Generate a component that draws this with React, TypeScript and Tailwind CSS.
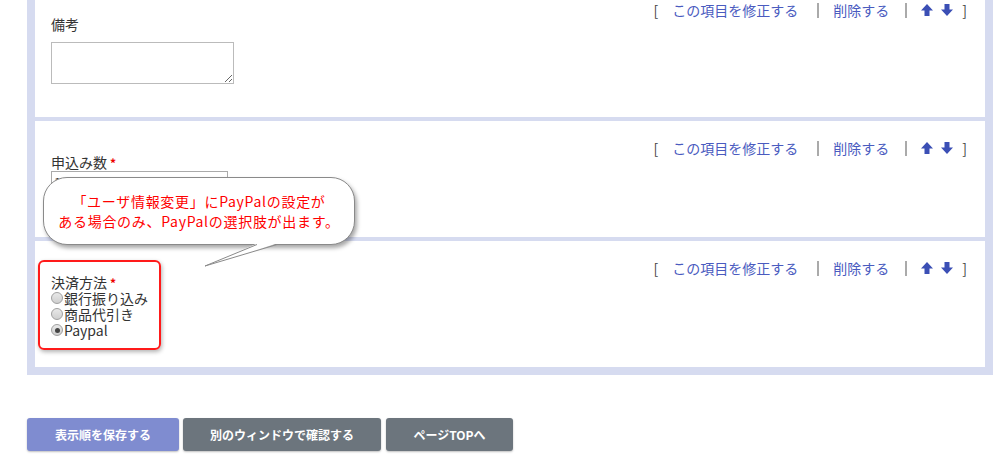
const font = "font-['Noto_Sans_CJK_JP','Noto_Sans',sans-serif]";

function Arrow({ down = false }: { down?: boolean }) {
  return (
    <svg width="14" height="14" viewBox="0 0 14 14" className={down ? 'rotate-180' : ''}>
      <path d="M7 1 L13 7.5 H9.5 V13 H4.5 V7.5 H1 Z" fill="#3b4fb5" />
    </svg>
  );
}

function Actions() {
  return (
    <div className="flex h-[14px] items-center justify-end pr-[18px] text-[14px] leading-[14px]">
      <span className="text-[#444]">[</span>
      <a className="ml-[14px] text-[#4a5bbf]">この項目を修正する</a>
      <span className="ml-[19px] mr-[14px] h-[15px] w-[2px] bg-[#aaa]" />
      <a className="text-[#4a5bbf]">削除する</a>
      <span className="ml-[16px] mr-[13px] h-[15px] w-[2px] bg-[#aaa]" />
      <Arrow />
      <span className="w-[6px]" />
      <Arrow down />
      <span className="ml-[8px] text-[#444]">]</span>
    </div>
  );
}

function Label({ text, required = false }: { text: string; required?: boolean }) {
  return (
    <div className="text-[14px] leading-[15px] text-[#333]">
      {text}
      {required && <span className="ml-[3px] align-top text-[12px] font-bold text-[#e00]">*</span>}
    </div>
  );
}

function Radio({ label, checked = false }: { label: string; checked?: boolean }) {
  return (
    <div className="flex h-[16px] items-center text-[14px] leading-[16px] text-[#333]">
      <span className="mr-[1px] flex h-[12px] w-[12px] items-center justify-center rounded-full border border-[#a0a0a0] bg-gradient-to-b from-[#e8e8e8] to-[#cfcfcf]">
        {checked && <span className="h-[5px] w-[5px] rounded-full bg-[#444]" />}
      </span>
      {label}
    </div>
  );
}

export default function App() {
  return (
    <div className={`relative h-[459px] w-[1008px] overflow-hidden bg-white ${font}`}>
      {/* form items */}
      <div className="-mt-[17px] ml-[27px] flex w-[966px] flex-col gap-[4px] bg-[#d6dbf0] px-[8px] pb-[8px]">
        <div className="bg-white pt-[20px] pb-[33px] pl-[16px]">
          <Actions />
          <Label text="備考" />
          <textarea className="mt-[10px] block h-[42px] w-[183px] border border-[#bbb] bg-white" />
        </div>

        <div className="bg-white pt-[20px] pb-[44px] pl-[16px]">
          <Actions />
          <Label text="申込み数" required />
          <input
            defaultValue="1"
            className="mt-[1px] block h-[22px] w-[177px] border border-[#aaa] px-[2px] text-[13px] text-[#333]"
          />
        </div>

        <div className="bg-white pt-[20px] pb-[29px] pl-[16px]">
          <Actions />
          <Label text="決済方法" required />
          <Radio label="銀行振り込み" />
          <Radio label="商品代引き" />
          <Radio label="Paypal" checked />
        </div>
      </div>

      {/* buttons */}
      <div className="mt-[43px] ml-[27px] flex gap-[4px] text-[12px] font-bold text-white">
        <button className="h-[33px] w-[152px] rounded-[3px] bg-[#7f8cd0] shadow-[0_1px_2px_rgba(0,0,0,0.25)]">
          表示順を保存する
        </button>
        <button className="h-[33px] w-[198px] rounded-[3px] bg-[#6c757d] shadow-[0_1px_2px_rgba(0,0,0,0.25)]">
          別のウィンドウで確認する
        </button>
        <button className="ml-[1px] h-[33px] w-[127px] rounded-[3px] bg-[#6c757d] shadow-[0_1px_2px_rgba(0,0,0,0.25)]">
          ページTOPへ
        </button>
      </div>

      {/* annotation: red frame */}
      <div className="pointer-events-none absolute left-[38px] top-[260px] h-[90px] w-[123px] rounded-[6px] border-2 border-[#ff1a1a] shadow-[1px_2px_4px_rgba(0,0,0,0.3)]" />

      {/* annotation: callout */}
      <div className="absolute left-[43px] top-[177px] flex h-[68px] w-[312px] flex-col items-center justify-center rounded-[24px] border border-[#8a8a8a] bg-white text-[14px] leading-[20px] tracking-[0.7px] text-[#ff0000] shadow-[2px_3px_4px_rgba(0,0,0,0.35)]">
        <div>「ユーザ情報変更」にPayPalの設定が</div>
        <div>ある場合のみ、PayPalの選択肢が出ます。</div>
      </div>
      <svg className="absolute left-[200px] top-[240px]" width="85" height="30" viewBox="0 0 85 30">
        <polygon points="57,3.5 77,3.5 5,26" fill="white" />
        <polyline points="57,4.5 5,26 77,4.5" fill="none" stroke="#8a8a8a" strokeWidth="1" />
      </svg>
    </div>
  );
}
